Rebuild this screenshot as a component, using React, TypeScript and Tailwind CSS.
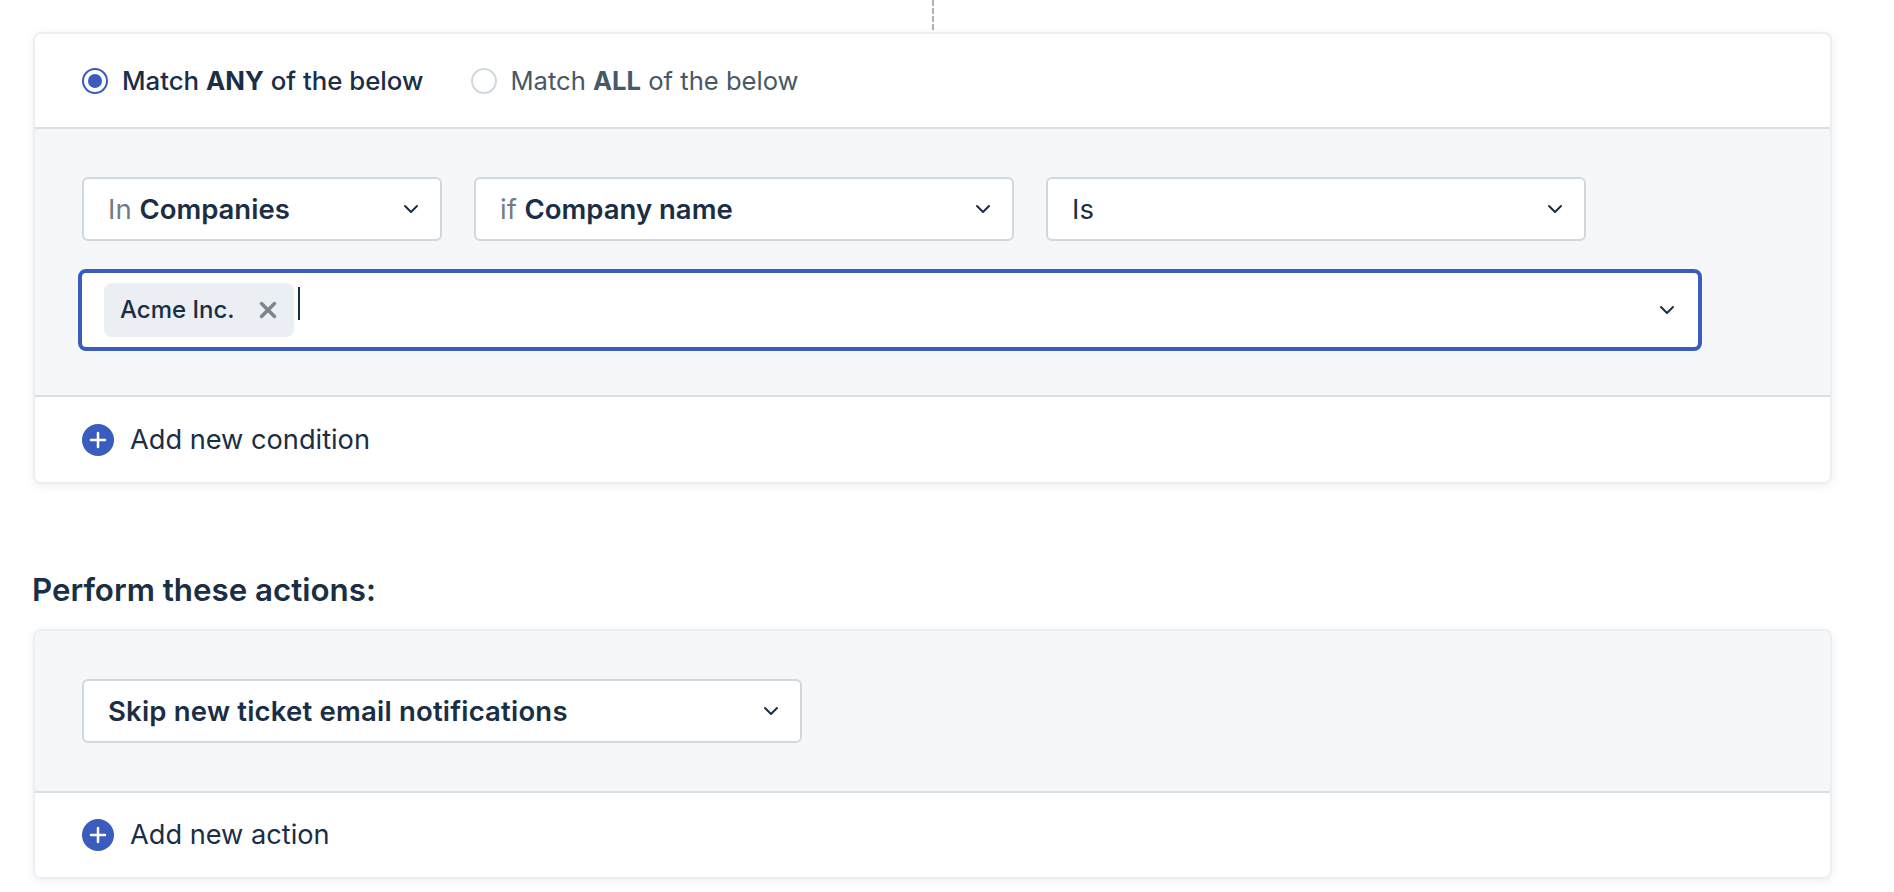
import { ChevronDown, Plus, X } from 'lucide-react'

const Chevron = () => (
  <ChevronDown className="w-[24px] h-[24px] text-[#1a2e45]" strokeWidth={2} />
)

const Select = ({
  prefix,
  label,
  width,
  weight = 'font-semibold',
}: {
  prefix?: string
  label: string
  width: string
  weight?: string
}) => (
  <div
    className={`${width} h-[64px] flex items-center justify-between bg-white border-2 border-[#cfd7df] rounded-[6px] pl-[24px] pr-[17px]`}
  >
    <span className="pt-[1px] text-[27.5px] leading-none text-[#1a2e45]">
      {prefix && <span className="text-[#6f7c87]">{prefix} </span>}
      <span className={weight}>{label}</span>
    </span>
    <Chevron />
  </div>
)

const AddRow = ({ label, height }: { label: string; height: string }) => (
  <div className={`${height} flex items-center pl-[47px] gap-[16px]`}>
    <span className="w-[32px] h-[32px] rounded-full bg-[#3a5cbe] flex items-center justify-center">
      <Plus className="w-[24px] h-[24px] text-white" strokeWidth={2.5} />
    </span>
    <span className="text-[27.2px] leading-none text-[#1a2e45]">{label}</span>
  </div>
)

const App = () => {
  return (
    <div className="w-[1894px] h-[892px] bg-white overflow-hidden pl-[33px] font-['Inter',sans-serif]">
      <div className="h-[32px] pl-[899px]">
        <div className="h-[30px] border-l-2 border-dashed border-[#a9b2ba]" />
      </div>

      <div className="w-[1799px] border-2 border-[#ebeff3] rounded-[8px] shadow-[0_2px_8px_rgba(24,50,71,0.08)]">
        <div className="h-[95px] flex items-center pl-[47px] border-b-2 border-[#dadfe3]">
          <div className="flex items-center gap-[14px] mr-[48px]">
            <span className="w-[26px] h-[26px] rounded-full border-2 border-[#3a5cbe] flex items-center justify-center">
              <span className="w-[14px] h-[14px] rounded-full bg-[#3a5cbe]" />
            </span>
            <span className="text-[25.8px] leading-none font-medium text-[#1a2e45]">
              Match <b className="font-bold">ANY</b> of the below
            </span>
          </div>
          <div className="flex items-center gap-[13px]">
            <span className="w-[26px] h-[26px] rounded-full border-2 border-[#cfd7df]" />
            <span className="text-[25.6px] leading-none text-[#475867]">
              Match <b className="font-bold">ALL</b> of the below
            </span>
          </div>
        </div>

        <div className="h-[268px] bg-[#f5f7f9] border-b-2 border-[#dadfe3] pl-[47px] pt-[48px]">
          <div className="flex gap-[32px]">
            <Select prefix="In" label="Companies" width="w-[360px]" />
            <Select prefix="if" label="Company name" width="w-[540px]" />
            <Select label="Is" width="w-[540px]" weight="font-normal" />
          </div>
          <div className="mt-[28px] -ml-[4px] w-[1624px] h-[82px] flex items-center justify-between bg-white border-[4px] border-[#3a5cbe] rounded-[8px] pl-[22px] pr-[19px]">
            <div className="flex items-center">
              <div className="w-[190px] h-[54px] flex items-center justify-between bg-[#ebeff3] rounded-[8px] pl-[16px] pr-[13px]">
                <span className="text-[24px] leading-none font-medium text-[#1a2e45]">Acme Inc.</span>
                <X className="w-[26px] h-[26px] text-[#7a858e]" strokeWidth={3.2} />
              </div>
              <span className="w-[2px] h-[33px] ml-[4px] mb-[13px] bg-[#1a2e45]" />
            </div>
            <Chevron />
          </div>
        </div>

        <AddRow label="Add new condition" height="h-[85px]" />
      </div>

      <h2 className="h-[145px] -ml-[1px] pt-[88px] text-[31.3px] leading-[36px] font-semibold text-[#1a2e45]">
        Perform these actions:
      </h2>

      <div className="w-[1799px] border-2 border-[#ebeff3] rounded-[8px] shadow-[0_2px_8px_rgba(24,50,71,0.08)]">
        <div className="h-[162px] rounded-t-[6px] bg-[#f5f7f9] border-b-2 border-[#dadfe3] pl-[47px] pt-[48px]">
          <div className="tracking-[0.2px]">
            <Select label="Skip new ticket email notifications" width="w-[720px]" />
          </div>
        </div>
        <AddRow label="Add new action" height="h-[84px]" />
      </div>
    </div>
  )
}

export default App
